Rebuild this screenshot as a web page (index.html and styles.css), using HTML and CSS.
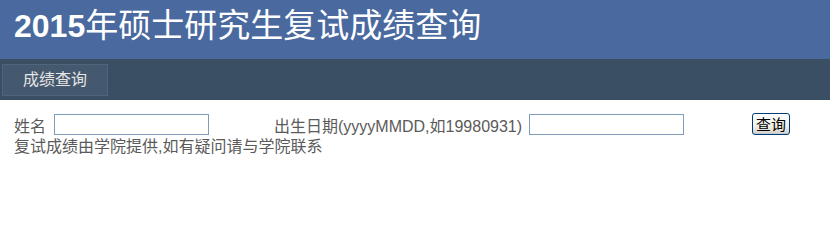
FILE: index.html
```html
<!DOCTYPE html>
<html lang="zh-CN">
<head>
<meta charset="utf-8">
<title>2015年硕士研究生复试成绩查询</title>
<link rel="stylesheet" href="styles.css">
</head>
<body>
<header class="banner">
  <h1 class="title"><span class="year">2015</span>年硕士研究生复试成绩查询</h1>
</header>
<nav class="nav">
  <a class="tab" href="#">成绩查询</a>
</nav>
<main class="content">
  <form class="row" onsubmit="return false">
    <span class="label name-label">姓名</span>
    <input class="field" type="text">
    <span class="label date-label">出生日期(yyyyMMDD,如19980931)</span>
    <input class="field" type="text">
    <button class="btn" type="submit">查询</button>
  </form>
  <p class="note">复试成绩由学院提供,如有疑问请与学院联系</p>
</main>
</body>
</html>
```
FILE: styles.css
```css
html, body {
  margin: 0;
  padding: 0;
  background: #fff;
  font-family: "Liberation Sans", "Noto Sans CJK SC", sans-serif;
}
.banner {
  height: 59px;
  box-sizing: border-box;
  background: #4a6a9f;
  padding: 7px 0 0 14px;
  overflow: hidden;
}
.title {
  margin: 0;
  color: #fff;
  font-family: "Liberation Sans", "Noto Sans CJK SC", sans-serif;
  font-size: 33px;
  font-weight: normal;
  line-height: 38px;
  white-space: nowrap;
}
.year {
  font-size: 32px;
  font-weight: bold;
}
.nav {
  height: 41px;
  box-sizing: border-box;
  background: #3a4e64;
  padding: 5px 0 0 2px;
}
.tab {
  display: block;
  width: 106px;
  height: 32px;
  box-sizing: border-box;
  border: 1px solid #4f657b;
  background: #44586e;
  color: #e4e4e4;
  font-size: 16px;
  line-height: 30px;
  text-align: center;
  text-decoration: none;
}
.content {
  padding: 13px 0 0 14px;
}
.row {
  display: flex;
  align-items: flex-start;
  margin: 0;
}
.label {
  margin-top: 4px;
  font-size: 16px;
  line-height: 20px;
  color: #5a5a5a;
  white-space: nowrap;
}
.name-label {
  width: 40px;
}
.date-label {
  width: 243px;
  margin-left: 65px;
  margin-right: 12px;
}
.field {
  margin: 1px 0 0 0;
  width: 155px;
  height: 21px;
  box-sizing: border-box;
  border: 1px solid #7f9db9;
  padding: 0 2px;
  font-size: 13px;
  background: #fff;
  outline: none;
}
.btn {
  margin: 0 0 0 68px;
  width: 38px;
  height: 22px;
  box-sizing: border-box;
  padding: 0;
  border: 1px solid #003c74;
  border-radius: 3px;
  background: linear-gradient(#ffffff, #f0f0ea 60%, #d6d0c5);
  color: #000;
  font-family: "Noto Sans CJK SC", sans-serif;
  font-size: 15px;
  line-height: 18px;
  box-shadow: inset 0 -1px 0 #c1ccd9, inset 0 1px 0 #fff;
}
.note {
  margin: 0;
  font-size: 16px;
  line-height: 20px;
  color: #5a5a5a;
}
```
